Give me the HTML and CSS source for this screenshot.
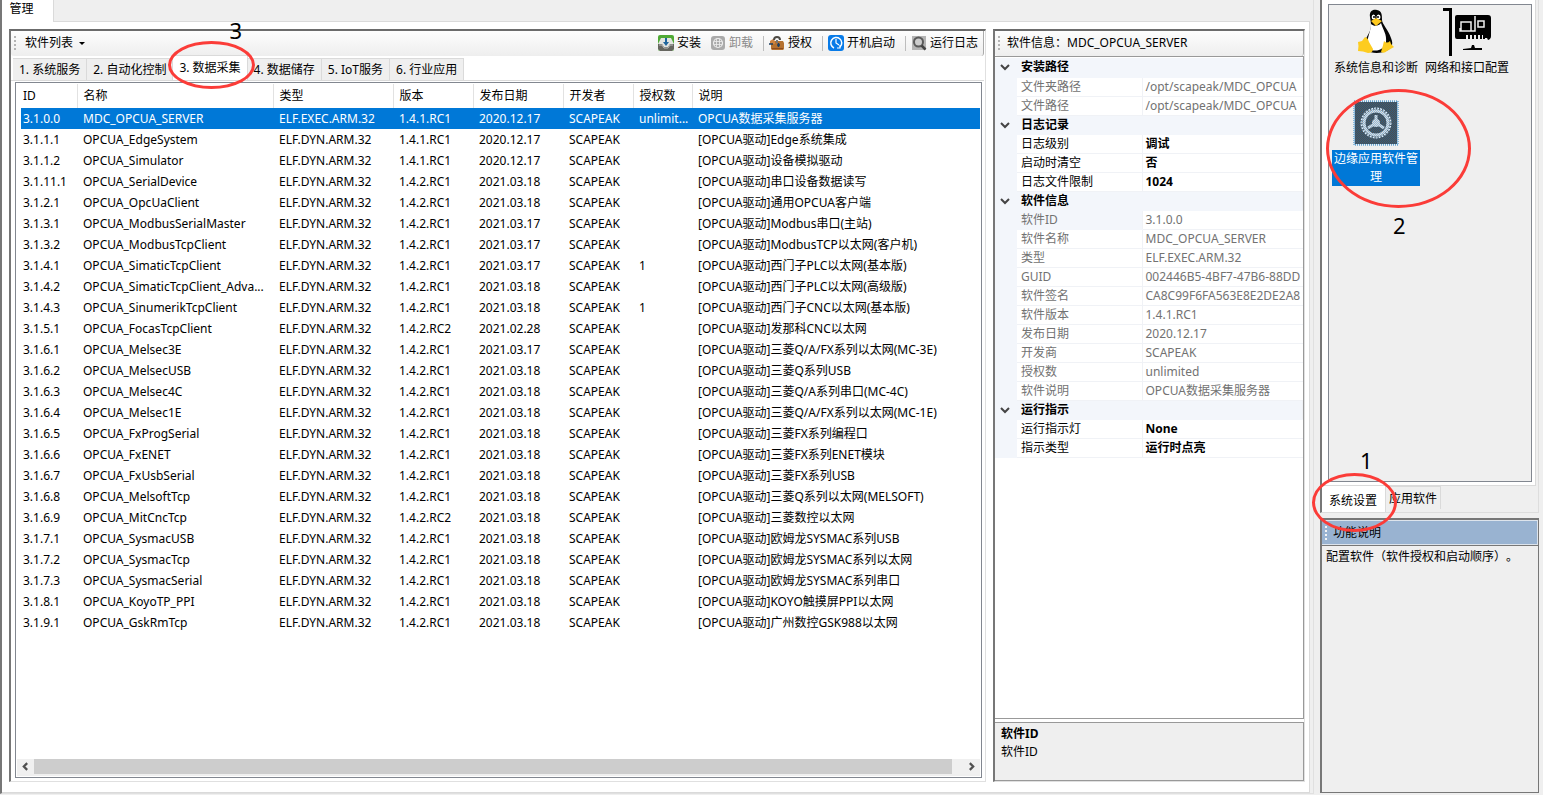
FILE: index.html
```html
<!DOCTYPE html>
<html lang="zh-CN">
<head>
<meta charset="utf-8">
<title>管理</title>
<link rel="stylesheet" href="styles.css">
</head>
<body>
<div class="app">
<main class="workspace">
  <nav class="page-tabs"><button class="page-tab">管理</button></nav>
  <div class="work-area">
    <section class="pane list-pane">
      <div class="toolbar">
        <i class="grip"></i>
        <button class="tool list-menu">软件列表 <i class="caret"></i></button>
        <span class="spacer"></span>
        <button class="tool"><svg viewBox="0 0 16 16"><rect width="16" height="16" rx="2" fill="#4fa934"/><path d="M0 9l3-6h10l3 6v5l-2 2H2l-2-2z" fill="#e2e4e0"/><path d="M0 9h4l2 3h4l2-3h4v5l-2 2H2l-2-2z" fill="#66665f"/><path d="M1 10h3l2 3h4l2-3h3" fill="none" stroke="#bbb"/><path d="M7 3h2v4h2l-3 4-3-4h2z" fill="#20659c"/></svg>安装</button>
        <button class="tool off" disabled><svg viewBox="0 0 16 16"><rect x="1" y="1" width="14" height="14" rx="3" fill="#aaa"/><circle cx="8" cy="8" r="4.500" fill="none" stroke="#eee" stroke-width="1.200"/><path d="M6.500 4v8M9.500 4v8M4 6.500h8M4 9.500h8" stroke="#eee" stroke-width=".8"/></svg>卸载</button>
        <i class="rule"></i>
        <button class="tool"><svg viewBox="0 0 16 16"><path d="M2 6h12l1 2v6l-1 1H3l-1-1z" fill="#b5712f"/><path d="M1 6l3-2 2 2v3H1z" fill="#cf8440"/><path d="M5 5q0-3 3-3t3 3" fill="none" stroke="#4d4a44" stroke-width="2"/><path d="M7 5h2v3H7z" fill="#777"/><path d="M0 9h4M9.500 8v4M8 10h3" stroke="#1e3f62" stroke-width="1.500"/><path d="M3 13.500h11" stroke="#8d4c20"/></svg>授权</button>
        <i class="rule"></i>
        <button class="tool"><svg viewBox="0 0 16 16"><rect width="16" height="16" rx="3" fill="#087be8"/><path d="M6 13A5.500 5.500 0 1 1 12 12" fill="none" stroke="#fff" stroke-width="1.500"/><path d="M8 4v4l3 2M9 13h3v-3" fill="none" stroke="#fff" stroke-width="1.200"/></svg>开机启动</button>
        <i class="rule"></i>
        <button class="tool"><svg viewBox="0 0 16 16"><rect x="1" y="1" width="14" height="14" fill="#b4b4b4"/><circle cx="7.500" cy="7" r="4.500" fill="#ccc" stroke="#5a5a5a" stroke-width="2"/><path d="M10.500 10.500l4 4" stroke="#444" stroke-width="2.500"/></svg>运行日志</button>
      </div>
      <div class="tabs">
        <button class="tab">1. 系统服务</button><button class="tab">2. 自动化控制</button>
        <div class="marked"><button class="tab current">3. 数据采集</button><i class="ring ring-tab"></i><b class="num num-tab">3</b></div>
        <button class="tab">4. 数据储存</button><button class="tab">5. IoT服务</button><button class="tab">6. 行业应用</button>
      </div>
      <div class="list-box">
        <table class="software">
          <colgroup><col class="c-id"><col class="c-name"><col class="c-type"><col class="c-ver"><col class="c-date"><col class="c-dev"><col class="c-lic"><col></colgroup>
          <thead><tr><th>ID</th><th>名称</th><th>类型</th><th>版本</th><th>发布日期</th><th>开发者</th><th>授权数</th><th>说明</th></tr></thead>
          <tbody>
          <tr class="selected"><td>3.1.0.0</td><td>MDC_OPCUA_SERVER</td><td>ELF.EXEC.ARM.32</td><td>1.4.1.RC1</td><td>2020.12.17</td><td>SCAPEAK</td><td>unlimit...</td><td>OPCUA数据采集服务器</td></tr>
          <tr><td>3.1.1.1</td><td>OPCUA_EdgeSystem</td><td>ELF.DYN.ARM.32</td><td>1.4.1.RC1</td><td>2020.12.17</td><td>SCAPEAK</td><td></td><td>[OPCUA驱动]Edge系统集成</td></tr>
          <tr><td>3.1.1.2</td><td>OPCUA_Simulator</td><td>ELF.DYN.ARM.32</td><td>1.4.1.RC1</td><td>2020.12.17</td><td>SCAPEAK</td><td></td><td>[OPCUA驱动]设备模拟驱动</td></tr>
          <tr><td>3.1.11.1</td><td>OPCUA_SerialDevice</td><td>ELF.DYN.ARM.32</td><td>1.4.2.RC1</td><td>2021.03.18</td><td>SCAPEAK</td><td></td><td>[OPCUA驱动]串口设备数据读写</td></tr>
          <tr><td>3.1.2.1</td><td>OPCUA_OpcUaClient</td><td>ELF.DYN.ARM.32</td><td>1.4.2.RC1</td><td>2021.03.18</td><td>SCAPEAK</td><td></td><td>[OPCUA驱动]通用OPCUA客户端</td></tr>
          <tr><td>3.1.3.1</td><td>OPCUA_ModbusSerialMaster</td><td>ELF.DYN.ARM.32</td><td>1.4.2.RC1</td><td>2021.03.17</td><td>SCAPEAK</td><td></td><td>[OPCUA驱动]Modbus串口(主站)</td></tr>
          <tr><td>3.1.3.2</td><td>OPCUA_ModbusTcpClient</td><td>ELF.DYN.ARM.32</td><td>1.4.2.RC1</td><td>2021.03.17</td><td>SCAPEAK</td><td></td><td>[OPCUA驱动]ModbusTCP以太网(客户机)</td></tr>
          <tr><td>3.1.4.1</td><td>OPCUA_SimaticTcpClient</td><td>ELF.DYN.ARM.32</td><td>1.4.2.RC1</td><td>2021.03.17</td><td>SCAPEAK</td><td>1</td><td>[OPCUA驱动]西门子PLC以太网(基本版)</td></tr>
          <tr><td>3.1.4.2</td><td>OPCUA_SimaticTcpClient_Adva...</td><td>ELF.DYN.ARM.32</td><td>1.4.2.RC1</td><td>2021.03.18</td><td>SCAPEAK</td><td></td><td>[OPCUA驱动]西门子PLC以太网(高级版)</td></tr>
          <tr><td>3.1.4.3</td><td>OPCUA_SinumerikTcpClient</td><td>ELF.DYN.ARM.32</td><td>1.4.2.RC1</td><td>2021.03.18</td><td>SCAPEAK</td><td>1</td><td>[OPCUA驱动]西门子CNC以太网(基本版)</td></tr>
          <tr><td>3.1.5.1</td><td>OPCUA_FocasTcpClient</td><td>ELF.DYN.ARM.32</td><td>1.4.2.RC2</td><td>2021.02.28</td><td>SCAPEAK</td><td></td><td>[OPCUA驱动]发那科CNC以太网</td></tr>
          <tr><td>3.1.6.1</td><td>OPCUA_Melsec3E</td><td>ELF.DYN.ARM.32</td><td>1.4.2.RC1</td><td>2021.03.17</td><td>SCAPEAK</td><td></td><td>[OPCUA驱动]三菱Q/A/FX系列以太网(MC-3E)</td></tr>
          <tr><td>3.1.6.2</td><td>OPCUA_MelsecUSB</td><td>ELF.DYN.ARM.32</td><td>1.4.2.RC1</td><td>2021.03.18</td><td>SCAPEAK</td><td></td><td>[OPCUA驱动]三菱Q系列USB</td></tr>
          <tr><td>3.1.6.3</td><td>OPCUA_Melsec4C</td><td>ELF.DYN.ARM.32</td><td>1.4.2.RC1</td><td>2021.03.18</td><td>SCAPEAK</td><td></td><td>[OPCUA驱动]三菱Q/A系列串口(MC-4C)</td></tr>
          <tr><td>3.1.6.4</td><td>OPCUA_Melsec1E</td><td>ELF.DYN.ARM.32</td><td>1.4.2.RC1</td><td>2021.03.18</td><td>SCAPEAK</td><td></td><td>[OPCUA驱动]三菱Q/A/FX系列以太网(MC-1E)</td></tr>
          <tr><td>3.1.6.5</td><td>OPCUA_FxProgSerial</td><td>ELF.DYN.ARM.32</td><td>1.4.2.RC1</td><td>2021.03.18</td><td>SCAPEAK</td><td></td><td>[OPCUA驱动]三菱FX系列编程口</td></tr>
          <tr><td>3.1.6.6</td><td>OPCUA_FxENET</td><td>ELF.DYN.ARM.32</td><td>1.4.2.RC1</td><td>2021.03.18</td><td>SCAPEAK</td><td></td><td>[OPCUA驱动]三菱FX系列ENET模块</td></tr>
          <tr><td>3.1.6.7</td><td>OPCUA_FxUsbSerial</td><td>ELF.DYN.ARM.32</td><td>1.4.2.RC1</td><td>2021.03.18</td><td>SCAPEAK</td><td></td><td>[OPCUA驱动]三菱FX系列USB</td></tr>
          <tr><td>3.1.6.8</td><td>OPCUA_MelsoftTcp</td><td>ELF.DYN.ARM.32</td><td>1.4.2.RC1</td><td>2021.03.18</td><td>SCAPEAK</td><td></td><td>[OPCUA驱动]三菱Q系列以太网(MELSOFT)</td></tr>
          <tr><td>3.1.6.9</td><td>OPCUA_MitCncTcp</td><td>ELF.DYN.ARM.32</td><td>1.4.2.RC2</td><td>2021.03.18</td><td>SCAPEAK</td><td></td><td>[OPCUA驱动]三菱数控以太网</td></tr>
          <tr><td>3.1.7.1</td><td>OPCUA_SysmacUSB</td><td>ELF.DYN.ARM.32</td><td>1.4.2.RC1</td><td>2021.03.18</td><td>SCAPEAK</td><td></td><td>[OPCUA驱动]欧姆龙SYSMAC系列USB</td></tr>
          <tr><td>3.1.7.2</td><td>OPCUA_SysmacTcp</td><td>ELF.DYN.ARM.32</td><td>1.4.2.RC1</td><td>2021.03.18</td><td>SCAPEAK</td><td></td><td>[OPCUA驱动]欧姆龙SYSMAC系列以太网</td></tr>
          <tr><td>3.1.7.3</td><td>OPCUA_SysmacSerial</td><td>ELF.DYN.ARM.32</td><td>1.4.2.RC1</td><td>2021.03.18</td><td>SCAPEAK</td><td></td><td>[OPCUA驱动]欧姆龙SYSMAC系列串口</td></tr>
          <tr><td>3.1.8.1</td><td>OPCUA_KoyoTP_PPI</td><td>ELF.DYN.ARM.32</td><td>1.4.2.RC1</td><td>2021.03.18</td><td>SCAPEAK</td><td></td><td>[OPCUA驱动]KOYO触摸屏PPI以太网</td></tr>
          <tr><td>3.1.9.1</td><td>OPCUA_GskRmTcp</td><td>ELF.DYN.ARM.32</td><td>1.4.2.RC1</td><td>2021.03.18</td><td>SCAPEAK</td><td></td><td>[OPCUA驱动]广州数控GSK988以太网</td></tr>
          </tbody>
        </table>
        <div class="scrollbar">
          <button class="scroll-btn" aria-label="向左滚动"><svg viewBox="0 0 8 8"><path d="M5.500 1l-3 3 3 3"/></svg></button>
          <i class="thumb"></i>
          <button class="scroll-btn" aria-label="向右滚动"><svg viewBox="0 0 8 8"><path d="M2.500 1l3 3-3 3"/></svg></button>
        </div>
      </div>
    </section>
    <section class="pane info-pane">
      <div class="toolbar"><i class="grip"></i><span class="title">软件信息：MDC_OPCUA_SERVER</span></div>
      <div class="props-box">
        <table class="props">
          <colgroup><col class="p-gutter"><col class="p-name"><col></colgroup>
          <tbody>
          <tr class="group"><td><svg viewBox="0 0 10 8"><path d="M1 2l4 4 4-4"/></svg></td><th colspan="2">安装路径</th></tr>
          <tr class="ro"><td></td><th>文件夹路径</th><td>/opt/scapeak/MDC_OPCUA</td></tr>
          <tr class="ro"><td></td><th>文件路径</th><td>/opt/scapeak/MDC_OPCUA</td></tr>
          <tr class="group"><td><svg viewBox="0 0 10 8"><path d="M1 2l4 4 4-4"/></svg></td><th colspan="2">日志记录</th></tr>
          <tr><td></td><th>日志级别</th><td>调试</td></tr>
          <tr><td></td><th>启动时清空</th><td>否</td></tr>
          <tr><td></td><th>日志文件限制</th><td>1024</td></tr>
          <tr class="group"><td><svg viewBox="0 0 10 8"><path d="M1 2l4 4 4-4"/></svg></td><th colspan="2">软件信息</th></tr>
          <tr class="ro active"><td></td><th>软件ID</th><td>3.1.0.0</td></tr>
          <tr class="ro"><td></td><th>软件名称</th><td>MDC_OPCUA_SERVER</td></tr>
          <tr class="ro"><td></td><th>类型</th><td>ELF.EXEC.ARM.32</td></tr>
          <tr class="ro"><td></td><th>GUID</th><td>002446B5-4BF7-47B6-88DD</td></tr>
          <tr class="ro"><td></td><th>软件签名</th><td>CA8C99F6FA563E8E2DE2A8</td></tr>
          <tr class="ro"><td></td><th>软件版本</th><td>1.4.1.RC1</td></tr>
          <tr class="ro"><td></td><th>发布日期</th><td>2020.12.17</td></tr>
          <tr class="ro"><td></td><th>开发商</th><td>SCAPEAK</td></tr>
          <tr class="ro"><td></td><th>授权数</th><td>unlimited</td></tr>
          <tr class="ro"><td></td><th>软件说明</th><td>OPCUA数据采集服务器</td></tr>
          <tr class="group"><td><svg viewBox="0 0 10 8"><path d="M1 2l4 4 4-4"/></svg></td><th colspan="2">运行指示</th></tr>
          <tr><td></td><th>运行指示灯</th><td>None</td></tr>
          <tr><td></td><th>指示类型</th><td>运行时点亮</td></tr>
          </tbody>
        </table>
      </div>
      <div class="help-box"><strong>软件ID</strong><span>软件ID</span></div>
    </section>
  </div>
</main>
<aside class="side">
  <section class="side-top">
    <div class="icon-frame">
      <div class="icons">
        <button class="item">
          <svg viewBox="0 0 48 48"><path d="M18 9C17 3 21 1 25 2c5 1 5 5 5 10 0 4 6 9 9 18 3 7 0 10-3 12-7 4-16 4-22 0-3-6 0-12 3-17 3-6 2-9 1-16z" fill="#050505"/><path d="M19 16c3 3 8 2 10-1 2 7 6 11 5 19-1 8-13 12-18 5-2-9 3-15 3-23z" fill="#fff"/><ellipse cx="21.500" cy="9" rx="1.800" ry="2.500" fill="#fff"/><ellipse cx="26.500" cy="9" rx="2" ry="2.500" fill="#fff"/><circle cx="22" cy="9" r="1"/><circle cx="26" cy="9" r="1"/><path d="M19 13l5-3 6 3-6 5z" fill="#ffc91e"/><path d="M6 34l4-1 3-4q3 1 4 5l4 7q0 4-5 4-5-2-10-2 1-5 0-9z" fill="#fdcc20"/><path d="M32 33q3 3 6 0l1 3 3 3-7 4q-3 3-6 1 2-6 3-11z" fill="#fdcc20"/></svg>
          <span>系统信息和诊断</span></button>
        <button class="item">
          <svg viewBox="0 0 48 48"><path d="M0 0h9v48H6V3H0z"/><path d="M12 9q0-2 2-2h31q3 0 3 3v18q0 3-3 4l-1-2h-2v1h-2v-4h-1v4h-2v-4h-2v4h-2v-4h-2v4h-2v-4h-2v4h-2v-4h-2v4h-9q-2 0-2-2z"/><path d="M18 14h10v9H18zM35 13h6v6h-6zM32 8v15H17v-3" fill="none" stroke="#efefef" stroke-width="1.500"/><path d="M29 37h2l1 3h7v2H20v-1l8-1z"/></svg>
          <span>网络和接口配置</span></button>
        <div class="marked"><button class="item picked">
          <svg viewBox="0 0 48 48"><defs><pattern id="dots" width="2" height="2" patternUnits="userSpaceOnUse"><path d="M0 0h1v1H0zM1 1h1v1H1z" fill="#0078d7"/></pattern></defs><rect x="3" y="3" width="42" height="42" fill="#4e4e4e"/><circle cx="24" cy="24" r="14.500" fill="none" stroke="#eee" stroke-width="2" stroke-dasharray="2 1"/><circle cx="24" cy="24" r="12" fill="none" stroke="#ddd" stroke-width="3"/><circle cx="24" cy="24" r="4" fill="#ddd"/><path d="M24 16v8l-8 5M24 24l8 5" fill="none" stroke="#ddd" stroke-width="3"/><rect x="2" y="2" width="44" height="44" fill="url(#dots)" opacity=".35"/><rect x="2" y="2" width="44" height="44" fill="none" stroke="#2080c4" stroke-dasharray="1 1"/></svg>
          <span>边缘应用软件管理</span></button><i class="ring ring-item"></i><b class="num num-item">2</b></div>
      </div>
    </div>
    <div class="side-tabs">
      <div class="marked"><button class="side-tab on">系统设置</button><i class="ring ring-side"></i><b class="num num-side">1</b></div>
      <button class="side-tab">应用软件</button>
    </div>
  </section>
  <section class="side-bottom">
    <h2><i class="grip light"></i>功能说明</h2>
    <p>配置软件（软件授权和启动顺序）。</p>
  </section>
</aside>
</div>
</body>
</html>
```
FILE: styles.css
```css
* { box-sizing: border-box; }
body {
  margin: 0;
  background: #efefef;
  color: #000;
  font: 12px/18px "Noto Sans", "Noto Sans CJK SC", sans-serif;
  text-spacing-trim: space-all;
}
button {
  margin: 0;
  padding: 0;
  border: 0;
  background: none;
  color: inherit;
  font: inherit;
  white-space: nowrap;
}
table { width: 100%; border-collapse: collapse; table-layout: fixed; }
th { font-weight: normal; text-align: left; }
td, th { padding: 0; overflow: hidden; white-space: nowrap; }

.app { display: flex; gap: 6px; height: 100vh; overflow: hidden; padding-right: 4px; }

/* main workspace */
.workspace {
  display: flex;
  flex: 1;
  flex-direction: column;
  min-width: 0;
  margin-bottom: 1px;
  padding-right: 3px;
  border: solid #e0e0e0;
  border-width: 0 1px 1px 0;
  border-left: 2px solid #777;
}
.page-tabs { display: flex; height: 22px; border-bottom: 1px solid #dadada; }
.page-tab { width: 52px; height: 22px; padding-right: 12px; padding-bottom: 4px; border-right: 1px solid #dadada; background: #fff; }
.work-area {
  display: flex;
  flex: 1;
  gap: 7px;
  min-height: 0;
  padding: 7px 4px 10px 7px;
  border: solid #dadada;
  border-width: 0 1px 1px 0;
  background: #fff;
}
.pane {
  display: flex;
  flex-direction: column;
  min-width: 0;
  border: 1px solid #e0e0e0;
  border-top: 2px solid #6b6b6b;
  border-left: 2px solid #777;
}
.list-pane { flex: 1; padding: 0 1px 2px 0; }
.info-pane { width: 312px; }

.toolbar {
  display: flex;
  flex: none;
  align-items: center;
  height: 25px;
  padding: 0 5px 1px 3px;
  border-right: 1px solid #aaa;
  border-radius: 0 0 3px 3px;
  background: linear-gradient(#fdfdfd, #eee);
}
.grip {
  flex: none;
  width: 2px;
  height: 14px;
  background: repeating-linear-gradient(#b4b4b4 0 2px, transparent 2px 4px);
}
.grip.light { background: repeating-linear-gradient(#f4f4f4 0 2px, transparent 2px 4px); }
.tool { display: flex; align-items: center; gap: 3px; }
.tool svg { width: 16px; height: 16px; }
.tool + .tool { margin-left: 9px; }
.off { color: #8b8b8b; }
.list-menu { margin-left: 9px; gap: 6px; }
.caret { border: 3px solid transparent; border-top-color: #000; border-bottom: 0; }
.spacer { flex: 1; }
.rule { width: 1px; height: 15px; margin: 0 5px 0 10px; background: #bdbdbd; }
.title { margin-left: 7px; white-space: nowrap; }

.tabs { display: flex; align-items: flex-end; height: 25px; padding-left: 2px; border-bottom: 1px solid #dadada; }
.tab { height: 22px; padding: 0 6px; border: solid #dadada; border-width: 1px 1px 0 0; background: #efefef; }
.tab.current { height: 25px; padding-bottom: 1px; background: #fff; }
.marked { position: relative; }

.list-box { display: flex; flex: 1; flex-direction: column; min-height: 0; margin: 1px 2px 1px 4px; padding: 1px; border: 1px solid #828790; }
.software { width: auto; margin: 0 0 0 4px; }
.software th { height: 24px; padding-left: 6px; border-right: 1px solid #e2e2e2; }
.software th:last-child { border-right: 0; }
.software td { height: 21px; padding-left: 6px; line-height: 20px; }
.software th:first-child, .software td:first-child { padding-left: 2px; }
.software .selected { background: #0078d7; color: #fff; }
.c-id { width: 56px; }
.c-name { width: 196px; }
.c-type { width: 120px; }
.c-ver { width: 80px; }
.c-date { width: 90px; }
.c-dev { width: 70px; }
.c-lic { width: 59px; }
.scrollbar { display: flex; height: 17px; margin-top: auto; border-bottom: 2px solid #efefef; background: #f0f0f0; }
.scroll-btn { width: 17px; }
.scroll-btn svg { display: block; width: 9px; height: 9px; margin: auto; fill: none; stroke: #505050; stroke-width: 2; }
.thumb { flex: 1; margin-right: 11px; background: #cdcdcd; }

.props-box { flex: 1; min-height: 0; overflow: hidden; padding-top: 1px; border: 1px solid #999; border-left: 0; }
.props td, .props th { height: 19px; border-bottom: 1px solid #f0f2f6; line-height: 18px; }
.props td:first-child, .props .group > *, .props .active th { background: #f3f6fb; border-bottom-color: #f3f6fb; }
.props th { padding-left: 4px; border-right: 1px solid #f0f2f6; }
.props td:last-child { padding-left: 3px; font-weight: bold; }
.props .group th { font-weight: bold; }
.props .ro th, .props .ro td:last-child { color: #727272; font-weight: normal; }
.props svg { display: block; width: 10px; height: 8px; margin-left: 5px; fill: none; stroke: #444; stroke-width: 2; }
.p-gutter { width: 22px; }
.p-name { width: 125px; }
.help-box { display: flex; flex-direction: column; height: 59px; margin-top: 3px; padding: 2px 6px; border: 1px solid #999; border-left: 0; background: #efefef; }

/* side column */
.side { display: flex; flex-direction: column; gap: 5px; width: 219px; padding-bottom: 2px; }
.side-top { display: flex; flex: 1; flex-direction: column; min-height: 0; border: solid #ddd; border-width: 0 1px 1px 0; border-left: 2px solid #777; }
.icon-frame { flex: 1; min-height: 0; margin-right: 2px; padding: 4px 3px 3px 6px; border: solid #dadada; border-width: 0 1px 1px 0; background: #fff; }
.icons {
  display: grid;
  grid-template-columns: 91px 91px;
  grid-template-rows: 91px 91px;
  height: 100%;
  padding: 3px;
  border: 1px solid #828790;
  background: #efefef;
}
.item { display: flex; flex-direction: column; align-items: center; gap: 3px; width: 88px; white-space: normal; }
.item svg { width: 48px; height: 48px; }
.item span { width: 88px; white-space: nowrap; }
.picked span { background: #0078d7; color: #fff; white-space: normal; }
.side-tabs { display: flex; height: 26px; }
.side-tab { height: 23px; padding: 2px 3px 0; border: solid #dadada; border-width: 1px 1px 0 0; }
.side-tab.on { height: 26px; padding: 3px 8px 0 7px; border-top: 0; background: #fff; }
.side-bottom {
  display: flex;
  flex-direction: column;
  height: 275px;
  border: solid #777;
  border-width: 2px 1px 1px 2px;
}
.side-bottom h2 {
  display: flex;
  align-items: center;
  gap: 6px;
  height: 25px;
  margin: 0;
  padding-left: 3px;
  border: 1px solid #dde4ec;
  border-left: 0;
  background: #99b3d1;
  font: inherit;
}
.side-bottom p { flex: 1; margin: 0; padding: 2px 4px; border-top: 1px solid #777; white-space: nowrap; }

/* callouts */
.ring { position: absolute; z-index: 2; border: 3px solid #fb3c38; border-radius: 50%; pointer-events: none; }
.num { position: absolute; z-index: 2; font-size: 22px; font-weight: normal; line-height: 24px; }
.ring-tab { top: -14px; left: -5px; width: 87px; height: 48px; }
.num-tab { top: -37px; left: 56px; }
.ring-item { top: -10px; left: -6px; width: 145px; height: 119px; }
.num-item { top: 114px; left: 61px; }
.ring-side { top: -13px; left: -10px; width: 85px; height: 59px; }
.num-side { top: -38px; left: 38px; }
```
